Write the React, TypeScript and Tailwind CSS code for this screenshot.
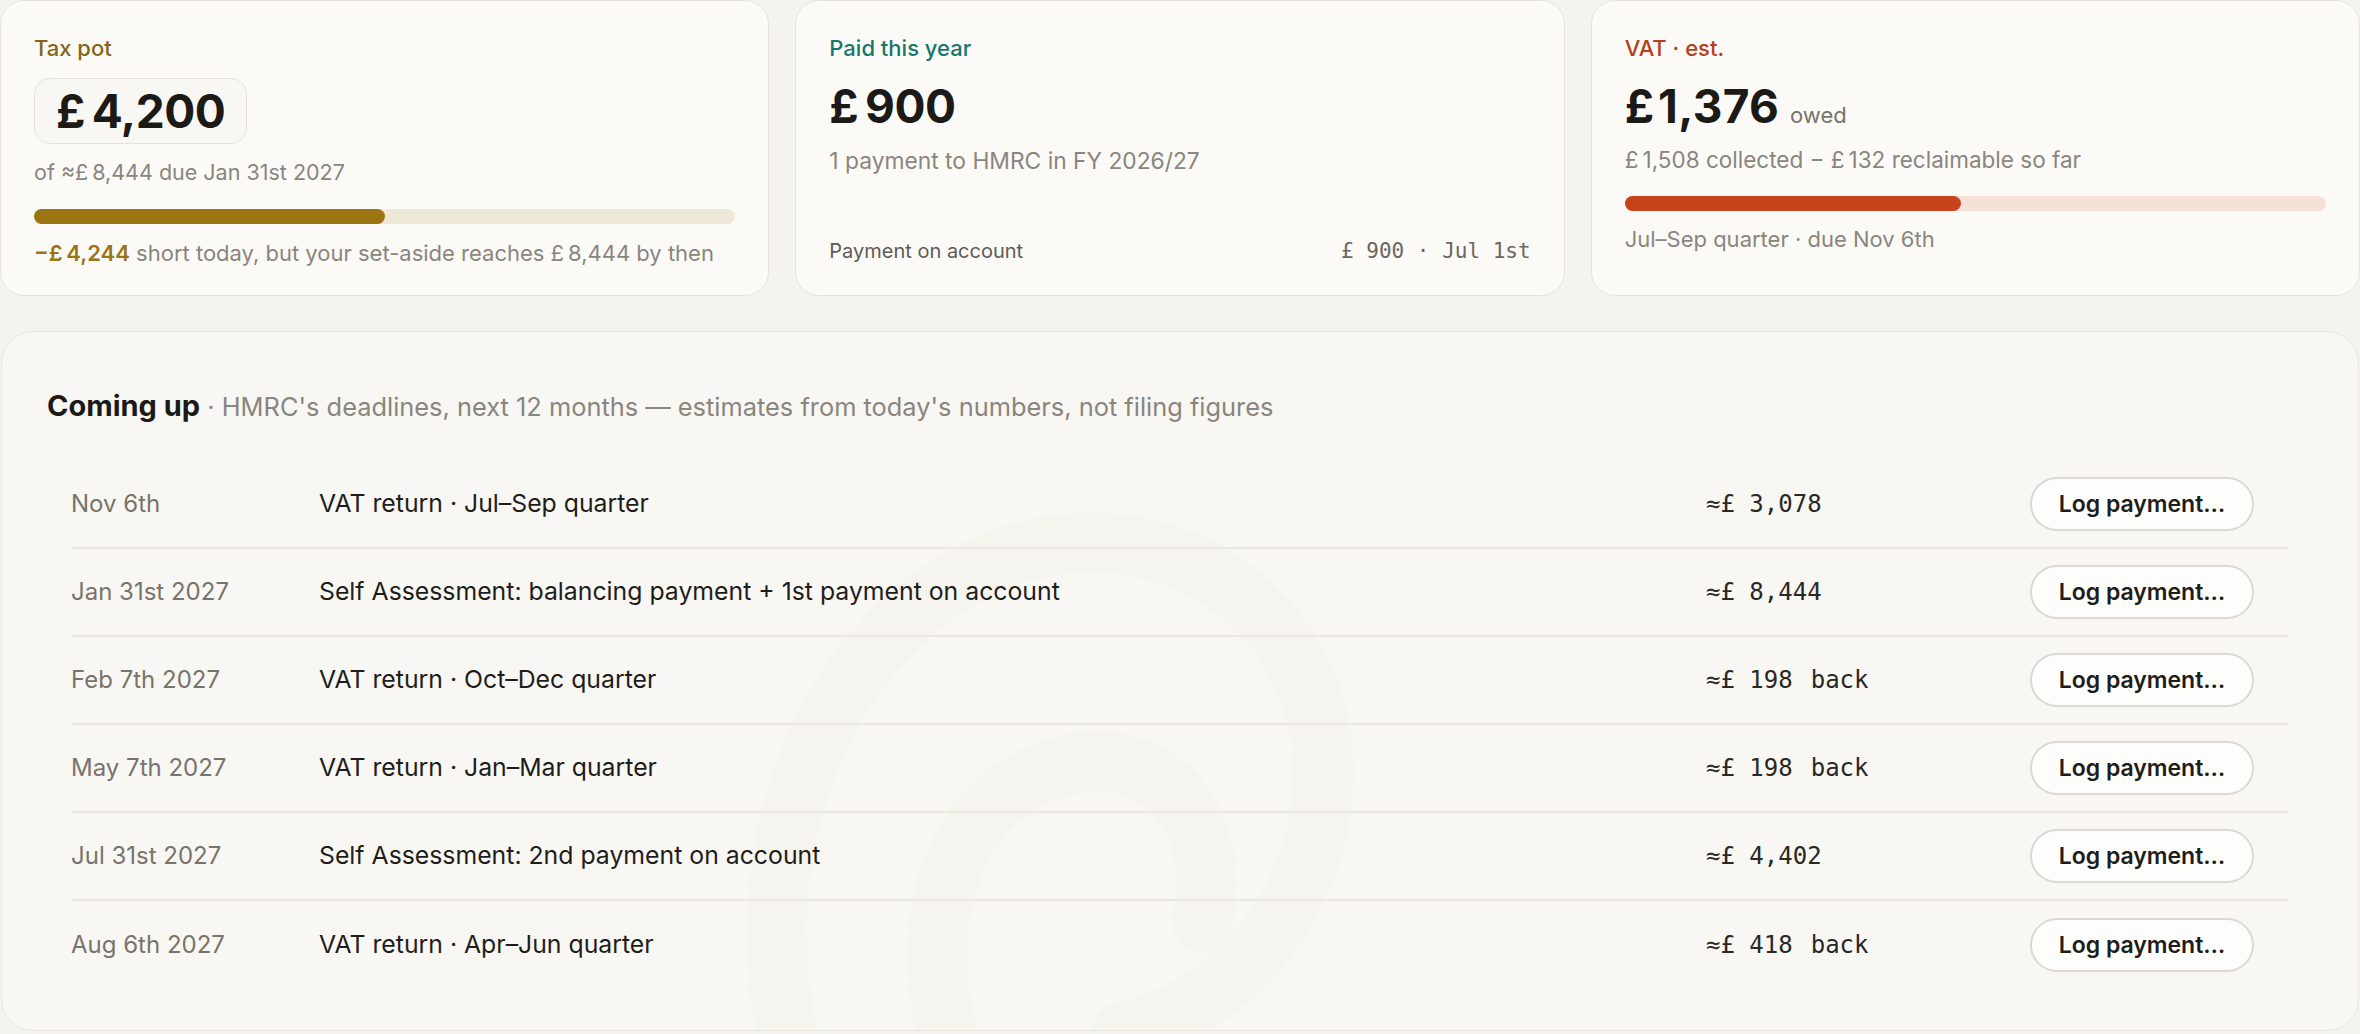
import React from "react";

const sans = { fontFamily: 'Inter, "Noto Sans", "Liberation Sans", sans-serif' };
const mono = { fontFamily: '"DejaVu Sans Mono", "Liberation Mono", monospace' };

type Row = { date: string; title: string; amount: string; back?: boolean };

const rows: Row[] = [
  { date: "Nov 6th", title: "VAT return · Jul–Sep quarter", amount: "≈£ 3,078" },
  { date: "Jan 31st 2027", title: "Self Assessment: balancing payment + 1st payment on account", amount: "≈£ 8,444" },
  { date: "Feb 7th 2027", title: "VAT return · Oct–Dec quarter", amount: "≈£ 198", back: true },
  { date: "May 7th 2027", title: "VAT return · Jan–Mar quarter", amount: "≈£ 198", back: true },
  { date: "Jul 31st 2027", title: "Self Assessment: 2nd payment on account", amount: "≈£ 4,402" },
  { date: "Aug 6th 2027", title: "VAT return · Apr–Jun quarter", amount: "≈£ 418", back: true },
];

function Watermark() {
  return (
    <svg
      className="pointer-events-none absolute left-[700px] top-[120px]"
      width="680"
      height="600"
      viewBox="0 0 680 600"
      fill="none"
    >
      <g stroke="#f5f4ef" strokeWidth="60" strokeLinecap="round">
        <path d="M90 600 C 40 420, 110 190, 290 110 C 470 40, 640 170, 620 350 C 605 470, 520 560, 420 580" />
        <path d="M250 600 C 210 470, 250 330, 380 310 C 470 300, 520 380, 500 470" />
      </g>
    </svg>
  );
}

export default function App() {
  return (
    <div
      className="w-[2360px] h-[1034px] overflow-hidden bg-[#f4f3ef] text-[#1c1a17]"
      style={sans}
    >
      <div className="grid grid-cols-3 gap-[26px] h-[296px]">
        {/* Tax pot */}
        <div className="flex flex-col rounded-[24px] border border-[#e7e4dd] bg-[#fbfaf7] px-[33px] pt-[32px]">
          <div className="text-[22px] leading-[30px] font-medium text-[#86651a]">Tax pot</div>
          <div className="mt-[15px] self-start rounded-[16px] border border-[#e6e3dc] bg-[#f8f7f3] px-[21px] py-[9px]">
            <div className="text-[46px] leading-[46px] font-bold tracking-[-0.01em] text-[#1c1a17]">£&#8201;4,200</div>
          </div>
          <div className="mt-[13px] text-[21.5px] leading-[30px] text-[#8a857d]">of ≈£&#8201;8,444 due Jan 31st 2027</div>
          <div className="mt-[22px] h-[15px] w-full rounded-full bg-[#eee8d8]">
            <div className="h-full rounded-full bg-[#9b7414]" style={{ width: "50%" }} />
          </div>
          <div className="mt-[14px] text-[22px] leading-[30px] text-[#8a857d]">
            <span className="font-semibold text-[#9a7415]">−£&#8201;4,244</span> short today, but your set-aside reaches £&#8201;8,444 by then
          </div>
        </div>

        {/* Paid this year */}
        <div className="flex flex-col rounded-[24px] border border-[#e7e4dd] bg-[#fbfaf7] px-[33px] pt-[32px] pb-[29px]">
          <div className="text-[22px] leading-[30px] font-medium text-[#16786a]">Paid this year</div>
          <div className="mt-[20px] text-[46px] leading-[46px] font-bold tracking-[-0.01em]">£&#8201;900</div>
          <div className="mt-[17px] text-[22.8px] leading-[30px] text-[#8a857d]">1 payment to HMRC in FY 2026/27</div>
          <div className="mt-auto flex items-center justify-between text-[20px] leading-[30px]">
            <span className="text-[#5f5b54]">Payment on account</span>
            <span className="text-[21px] text-[#6b665f]" style={mono}>£ 900 · Jul 1st</span>
          </div>
        </div>

        {/* VAT */}
        <div className="flex flex-col rounded-[24px] border border-[#e7e4dd] bg-[#fbfaf7] px-[33px] pt-[32px]">
          <div className="text-[22px] leading-[30px] font-medium text-[#b63e18]">VAT · est.</div>
          <div className="mt-[20px] flex h-[46px] items-baseline gap-[11px]">
            <span className="text-[46px] leading-[46px] font-bold tracking-[0.005em]">£&#8202;1,376</span>
            <span className="text-[22px] leading-none text-[#77726b]">owed</span>
          </div>
          <div className="mt-[16px] text-[22.5px] leading-[30px] text-[#8a857d]">£&#8201;1,508 collected − £&#8201;132 reclaimable so far</div>
          <div className="mt-[21px] h-[15px] w-full rounded-full bg-[#f6e1d9]">
            <div className="h-full rounded-full bg-[#c8431c]" style={{ width: "48%" }} />
          </div>
          <div className="mt-[13px] text-[22px] leading-[30px] text-[#8a857d]">Jul–Sep quarter · due Nov 6th</div>
        </div>
      </div>

      {/* Coming up panel */}
      <div className="relative mt-[35px] mx-[1px] h-[700px] overflow-hidden rounded-[32px] border border-[#e9e6df] bg-[#f8f7f3] pt-[56px]">
        <Watermark />
        <div className="relative px-[45px] text-[29px] leading-[36px]">
          <span className="font-bold text-[#1c1a17]">Coming up</span>
          <span className="text-[25.4px] text-[#8a857d]"> · HMRC's deadlines, next 12 months — estimates from today's numbers, not filing figures</span>
        </div>
        <div className="relative mx-[69px] mt-[36px]">
          {rows.map((r, i) => (
            <div
              key={i}
              className={
                "grid h-[88px] grid-cols-[248px_1fr_324px_224px] items-center pr-[35px] " +
                (i < rows.length - 1 ? "border-b-2 border-[#ebe8e2]" : "")
              }
            >
              <div className="text-[24px] text-[#78736b]">{r.date}</div>
              <div className="text-[24.8px] text-[#1f1d1a]">{r.title}</div>
              <div className="text-[24px] text-[#2a2825]" style={mono}>
                {r.amount}
                {r.back ? <span className="ml-[18px]">back</span> : null}
              </div>
              <button className="h-[54px] w-[224px] rounded-full border-2 border-[#dcd9d2] bg-[#fdfdfb] text-[23px] font-semibold text-[#1f1d1a]">
                Log payment…
              </button>
            </div>
          ))}
        </div>
      </div>
    </div>
  );
}
